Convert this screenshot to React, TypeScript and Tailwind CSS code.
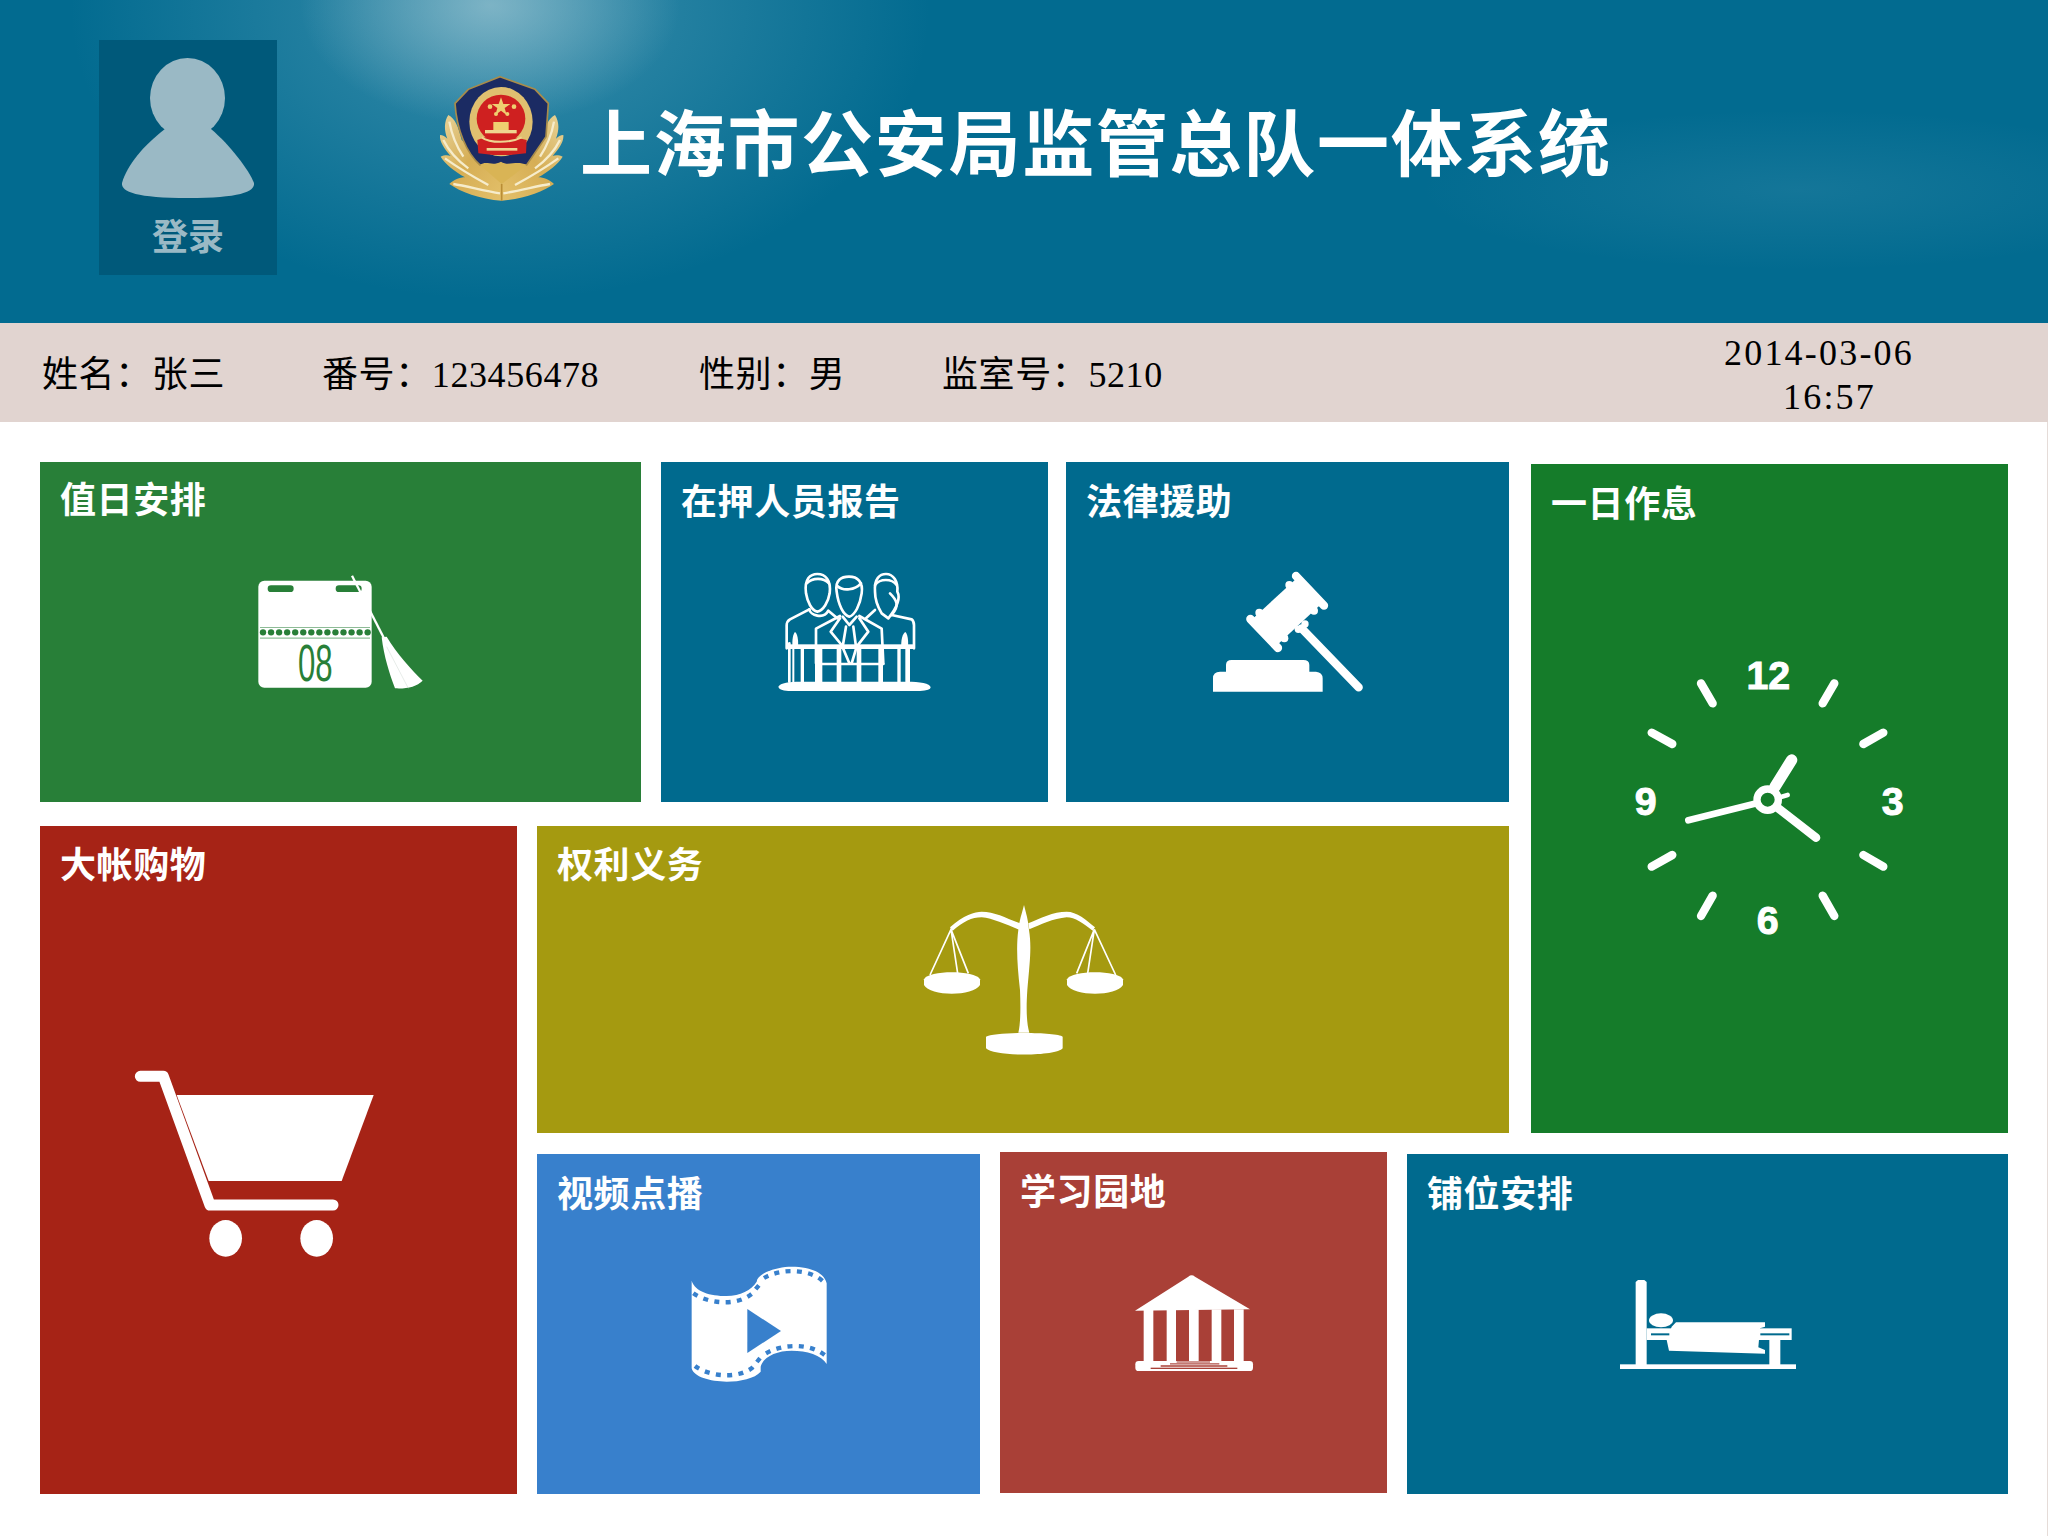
import type { ReactNode } from 'react'

function Tile({ title, className, titleClassName = 'pt-[21px]', children }: { title: string; className: string; titleClassName?: string; children: ReactNode }) {
  return (
    <div className={className}>
      <div className={`h-[60px] px-5 text-[36px] leading-[39px] font-bold tracking-[0.6px] text-white font-['Liberation_Sans','Noto_Sans_CJK_SC',sans-serif] ${titleClassName}`}>
        {title}
      </div>
      {children}
    </div>
  )
}

function Avatar() {
  return (
    <svg width="178" height="168" viewBox="0 0 178 168" className="block">
      <ellipse cx="88.5" cy="58" rx="37.5" ry="40" fill="#9ab9c5" />
      <path d="M66 89 L112 89 C131 105 150 130 155 143 C156 152 140 158 89 158 C38 158 22 152 23 143 C28 125 45 105 66 89Z" fill="#9ab9c5" />
    </svg>
  )
}

function PoliceBadge() {
  const leaf = 'M85 165 C105 175 115 200 125 240 L245 330 L245 422 C180 418 120 395 88 372 C100 360 120 352 135 352 C105 335 75 312 62 290 C72 285 85 285 92 288 C72 265 58 245 60 225 C68 225 76 230 82 236 C72 210 72 185 85 165Z'
  const veins = 'M88 185 C95 225 110 260 130 290 M70 240 C85 270 110 300 145 325 M75 295 C110 320 150 345 205 375 M100 372 C140 378 190 392 240 400'
  return (
    <svg width="146" height="150" viewBox="0 0 438 450" className="block ml-[143px] mt-[60px] shrink-0">
      <defs>
        <linearGradient id="gold" x1="0" y1="0" x2="1" y2="1">
          <stop offset="0" stopColor="#e8d49a" />
          <stop offset="0.5" stopColor="#d6ae55" />
          <stop offset="1" stopColor="#e3c06a" />
        </linearGradient>
      </defs>
      <path d={leaf} fill="url(#gold)" />
      <path d={veins} fill="none" stroke="#f6eccb" strokeWidth="7" />
      <g transform="translate(490,0) scale(-1,1)">
        <path d={leaf} fill="url(#gold)" />
        <path d={veins} fill="none" stroke="#f6eccb" strokeWidth="7" />
      </g>
      <path d="M245 372 L245 422" stroke="#b98d35" strokeWidth="5" />
      <path d="M240 50 L345 88 L385 130 L378 230 L320 315 L180 315 C140 280 110 210 105 130 L145 88Z" fill="#1b2b63" stroke="#a98c4a" strokeWidth="5" />
      <ellipse cx="243" cy="185" rx="95" ry="104" fill="#e0c070" />
      <ellipse cx="243" cy="176" rx="73" ry="72" fill="#cf2020" />
      <path d="M172 240 L195 232 L285 232 L320 240 L318 280 L270 285 L220 285 L175 280Z" fill="#cf2020" />
      <path d="M243 112 L250 132 L271 132 L254 144 L260 165 L243 152 L226 165 L232 144 L215 132 L236 132Z" fill="#efcf70" />
      <circle cx="210" cy="140" r="7" fill="#efcf70" />
      <circle cx="282" cy="140" r="7" fill="#efcf70" />
      <circle cx="228" cy="162" r="6" fill="#efcf70" />
      <circle cx="262" cy="162" r="6" fill="#efcf70" />
      <rect x="220" y="186" width="46" height="24" fill="#efcf70" />
      <rect x="195" y="210" width="95" height="10" fill="#efd590" />
      <path d="M185 232 C210 250 270 250 305 232" stroke="#efd590" strokeWidth="6" fill="none" />
      <rect x="200" y="264" width="92" height="8" fill="#efd590" />
      <path d="M180 315 C200 300 215 320 243 305 C265 320 290 300 320 315 L245 372Z" fill="#d9b455" />
    </svg>
  )
}

function CalendarBroom({ className }: { className: string }) {
  const dots = [...Array(14)].map((_, i) => 99 + i * 24.15)
  return (
    <svg width="220" height="170" viewBox="0 0 660 510" className={className}>
      <rect x="85" y="122" width="340" height="321" rx="18" fill="#fff" />
      <rect x="113" y="136" width="78" height="20" rx="10" fill="#287f38" />
      <rect x="317" y="136" width="78" height="20" rx="10" fill="#287f38" />
      <line x1="366" y1="107" x2="462" y2="295" stroke="#fff" strokeWidth="7" />
      <rect x="90" y="261" width="330" height="3" fill="#8dbb96" />
      <rect x="90" y="292" width="330" height="5" fill="#aad0b2" />
      {dots.map((x) => (
        <circle key={x} cx={x} cy="277" r="9.5" fill="#287f38" />
      ))}
      <text x="204" y="422" fontSize="158" textLength="104" lengthAdjust="spacingAndGlyphs" fill="#287f38" fontFamily="Liberation Sans">08</text>
      <path d="M455 292 L470 290 C500 340 545 390 578 422 C560 440 530 447 495 445 C478 400 462 350 455 292Z" fill="#fff" />
      <line x1="470" y1="320" x2="535" y2="445" stroke="#cfd8d2" strokeWidth="1.5" />
    </svg>
  )
}

function CourtPeople({ className }: { className: string }) {
  return (
    <svg width="200" height="160" viewBox="0 0 600 480" className={className}>
      <g fill="none" stroke="#fff" strokeWidth="8" strokeLinejoin="round" strokeLinecap="round">
        <path d="M138 130 C132 85 152 72 172 72 C196 72 214 90 209 130 C205 155 190 182 172 185 C155 182 142 155 138 130Z" />
        <path d="M140 100 C158 82 190 82 207 100" />
        <path d="M148 178 C150 195 190 210 205 182 L232 205" />
        <path d="M148 178 L90 208 Q80 214 80 226 L80 295" />
        <path d="M230 125 C224 90 245 80 267 80 C292 80 310 95 305 130 C300 165 285 195 268 200 C250 195 235 165 230 125Z" />
        <path d="M232 108 C250 125 285 120 303 100" />
        <path d="M240 198 L168 236 L168 340" />
        <path d="M298 198 L365 236 L370 340" />
        <path d="M240 205 L212 245 L245 285 L268 340 M298 205 L325 245 L290 290 L275 340" />
        <path d="M248 200 L268 225 L290 200 M258 230 L248 290 M280 230 L288 290" />
        <path d="M345 125 C342 85 360 72 378 72 C400 72 415 95 412 125 C425 150 405 180 385 205 L365 190 C350 165 345 150 345 125Z" />
        <path d="M345 105 C360 85 395 85 410 105" />
        <path d="M390 130 C410 150 420 165 395 195" />
        <path d="M345 180 L318 205" />
        <path d="M395 195 L455 208 Q462 214 462 226 L462 295" />
        <path d="M88 280 L88 395 M440 280 L440 395" />
        <path d="M170 342 L370 342" />
      </g>
      <rect x="80" y="283" width="382" height="14" fill="#fff" />
      <g fill="#fff">
        <rect x="97" y="297" width="6" height="100" />
        <rect x="122" y="297" width="10" height="100" />
        <rect x="165" y="297" width="22" height="100" />
        <rect x="230" y="297" width="14" height="100" />
        <rect x="290" y="297" width="14" height="100" />
        <rect x="355" y="297" width="14" height="100" />
        <rect x="412" y="297" width="10" height="100" />
        <rect x="444" y="297" width="6" height="100" />
        <path d="M98 295 C95 270 100 250 105 246 C112 250 116 270 114 295Z" />
        <path d="M424 295 C422 270 428 250 436 246 C442 250 446 270 444 295Z" />
        <path d="M55 410 C60 398 90 395 120 395 L440 395 C480 395 510 400 512 412 Q512 422 480 423 L85 423 Q55 420 55 410Z" />
      </g>
    </svg>
  )
}

function Gavel({ className }: { className: string }) {
  return (
    <svg width="200" height="160" viewBox="0 0 600 480" className={className}>
      <g fill="#fff">
        <polygon points="184,210 322,83 396,160 259,287" />
        <circle cx="208" cy="188" r="12" />
        <circle cx="298" cy="105" r="12" />
        <circle cx="372" cy="182" r="12" />
        <circle cx="283" cy="265" r="12" />
        <circle cx="325" cy="238" r="11" />
        <circle cx="345" cy="222" r="11" />
        <path d="M108 345 Q108 330 125 330 L340 330 Q358 330 358 345 L358 365 L378 365 Q398 367 398 385 L398 425 L69 425 L69 385 Q69 365 90 365 L108 365Z" />
      </g>
      <g stroke="#fff" strokeWidth="25" strokeLinecap="round">
        <line x1="181" y1="207" x2="264" y2="294" />
        <line x1="318" y1="78" x2="402" y2="167" />
        <line x1="335" y1="235" x2="506" y2="412" />
      </g>
    </svg>
  )
}

function Clock({ className }: { className: string }) {
  const ticks = [
    [303, 130, 338, 190],
    [703, 130, 668, 190],
    [850, 278, 790, 312],
    [155, 278, 217, 312],
    [155, 680, 217, 645],
    [850, 680, 790, 645],
    [303, 828, 338, 767],
    [703, 828, 668, 767],
  ]
  return (
    <svg width="340" height="320" viewBox="0 0 1020 960" className={className}>
      <g stroke="#fff" strokeLinecap="round" fill="none">
        {ticks.map((t) => (
          <line key={t.join()} x1={t[0]} y1={t[1]} x2={t[2]} y2={t[3]} strokeWidth="25" />
        ))}
        <line x1="525" y1="440" x2="575" y2="360" strokeWidth="34" />
        <line x1="470" y1="490" x2="265" y2="541" strokeWidth="20" />
        <line x1="535" y1="505" x2="648" y2="593" strokeWidth="26" />
        <line x1="545" y1="470" x2="563" y2="465" strokeWidth="14" />
        <circle cx="503" cy="479" r="32" strokeWidth="22" />
      </g>
      <g fill="#fff" stroke="#fff" strokeWidth="3" fontFamily="Liberation Sans" fontWeight="700" fontSize="118" textAnchor="middle">
        <text x="505" y="148">12</text>
        <text x="878" y="525">3</text>
        <text x="137" y="525">9</text>
        <text x="503" y="882">6</text>
      </g>
    </svg>
  )
}

function Scales({ className }: { className: string }) {
  return (
    <svg width="240" height="180" viewBox="0 0 720 540" className={className}>
      <g fill="#fff">
        <path d="M150 112 C190 75 225 65 245 65 C285 65 320 85 360 100 L360 120 C320 105 280 85 245 82 C215 82 190 95 158 122Z" />
        <path d="M385 100 C420 85 460 65 500 65 C530 65 560 90 585 112 L578 122 C550 100 525 82 500 82 C460 85 420 105 388 118Z" />
        <path d="M372 45 C378 70 385 90 387 120 C395 170 390 210 382 300 C378 360 380 400 388 428 L355 428 C362 400 362 350 360 300 C352 230 348 170 355 120 C358 90 366 70 372 45Z" />
        <path d="M258 440 C280 425 470 425 488 440 L488 475 C470 500 280 500 258 475Z" />
        <path d="M72 268 C85 240 225 240 240 268 L240 285 C220 320 90 320 72 285Z" />
        <path d="M501 268 C515 240 655 240 669 268 L669 285 C650 320 520 320 501 285Z" />
      </g>
      <g stroke="#fff" strokeWidth="5" fill="none">
        <path d="M90 255 L153 118 L173 250 M153 118 L205 250" />
        <path d="M530 250 L583 118 L563 250 M583 118 L647 255" />
      </g>
    </svg>
  )
}

function Cart({ className }: { className: string }) {
  return (
    <svg width="290" height="230" viewBox="0 0 870 690" className={className}>
      <path d="M91 79 L160 79 L300 465 L669 465" fill="none" stroke="#fff" strokeWidth="33" strokeLinecap="round" strokeLinejoin="round" />
      <polygon points="200,135 791,135 695,393 296,393" fill="#fff" />
      <ellipse cx="347" cy="565" rx="49" ry="55" fill="#fff" />
      <ellipse cx="620" cy="565" rx="49" ry="55" fill="#fff" />
    </svg>
  )
}

function FilmStrip({ className }: { className: string }) {
  return (
    <svg width="190" height="150" viewBox="0 0 570 450" className={className}>
      <path d="M65 92 C75 125 120 138 170 138 C210 138 245 120 260 95 C262 70 320 50 365 50 C415 50 462 65 470 100 L470 342 C455 315 410 302 365 302 C320 302 280 320 272 350 L272 365 C255 385 210 395 170 395 C120 395 70 380 65 355Z" fill="#fff" />
      <g fill="none" stroke="#3880cc" strokeWidth="13" strokeDasharray="15 19">
        <path d="M70 130 C110 158 195 172 245 132 L270 102" />
        <path d="M282 84 C330 55 420 55 460 95" />
        <path d="M75 348 C110 376 195 390 245 355 L272 322" />
        <path d="M288 310 C340 280 420 280 464 315" />
      </g>
      <polygon points="232,177 333,243 232,309" fill="#3880cc" />
    </svg>
  )
}

function Temple({ className }: { className: string }) {
  return (
    <svg width="170" height="130" viewBox="0 0 510 390" className={className}>
      <g fill="#fff">
        <path d="M45 152 L205 50 Q215 42 225 50 L390 148Z" />
        <rect x="71" y="148" width="29" height="160" />
        <rect x="140" y="148" width="28" height="160" />
        <rect x="207" y="148" width="29" height="160" />
        <rect x="275" y="148" width="29" height="160" />
        <rect x="342" y="148" width="29" height="160" />
        <rect x="46" y="303" width="353" height="30" rx="10" />
      </g>
      <g fill="#a94037">
        <rect x="170" y="303" width="100" height="6" opacity="0.55" />
        <rect x="150" y="309" width="148" height="5" opacity="0.7" />
        <rect x="122" y="315" width="200" height="6" opacity="0.75" />
        <rect x="92" y="323" width="260" height="4" />
      </g>
    </svg>
  )
}

function Bed({ className }: { className: string }) {
  return (
    <svg width="210" height="130" viewBox="0 0 630 390" className={className}>
      <g fill="#fff">
        <path d="M107 66 L114 60 L133 60 L140 66 L140 320 L107 320Z" />
        <rect x="60" y="313" width="528" height="14" />
        <rect x="508" y="235" width="33" height="85" />
        <rect x="140" y="205" width="435" height="35" />
        <polygon points="228,187 495,187 495,200 480,205 475,262 495,270 495,281 207,272 200,240 215,200" />
        <ellipse cx="183" cy="181" rx="36" ry="21" />
      </g>
      <g fill="#006a8e">
        <rect x="153" y="220" width="55" height="6" />
        <rect x="481" y="220" width="87" height="6" />
      </g>
    </svg>
  )
}

export default function App() {
  return (
    <div className="w-[2048px] h-[1536px] bg-white font-['Liberation_Serif','Noto_Sans_CJK_SC',serif]">
      <header className="h-[323px] flex items-start bg-[#026b90] bg-[radial-gradient(ellipse_190px_120px_at_490px_5px,rgba(170,205,215,0.6),rgba(170,205,215,0)),radial-gradient(ellipse_430px_290px_at_500px_10px,rgba(95,165,190,0.6),rgba(95,165,190,0)),radial-gradient(ellipse_380px_80px_at_1800px_190px,rgba(130,185,205,0.14),rgba(130,185,205,0))]">
        <div className="ml-[99px] mt-[40px] w-[178px] h-[235px] bg-[#00597a] flex flex-col items-center shrink-0">
          <Avatar />
          <div className="mt-[8px] text-[36px] leading-[36px] font-bold text-[#9ab9c5] font-['Noto_Sans_CJK_SC',sans-serif]">登录</div>
        </div>
        <PoliceBadge />
        <h1 className="ml-[14px] mt-[99px] text-[72px] leading-[80px] font-bold tracking-[1.7px] text-white whitespace-nowrap font-['Noto_Sans_CJK_SC',sans-serif]">
          上海市公安局监管总队一体系统
        </h1>
      </header>

      <div className="h-[99px] bg-[#e1d4d0] flex items-center pl-[42px] text-[36px] tracking-[0.6px] text-black">
        <div className="w-[280px] pt-[5px] shrink-0">姓名：张三</div>
        <div className="w-[377px] pt-[5px] shrink-0">番号：123456478</div>
        <div className="w-[243px] pt-[5px] shrink-0">性别：男</div>
        <div className="w-[782px] pt-[5px] shrink-0">监室号：5210</div>
        <div className="flex flex-col text-[36px] leading-[44px] tracking-[2.2px] pt-[5px]">
          <div>2014-03-06</div>
          <div className="ml-[59px]">16:57</div>
        </div>
      </div>

      <main className="grid h-[1114px] border-r border-[#e5dcd8] grid-cols-[477px_20px_104px_20px_319px_20px_48px_18px_321px_20px_102px_22px_477px] grid-rows-[340px_24px_307px_21px_340px] content-start pl-[40px] pt-[40px]">
        <Tile title="值日安排" titleClassName="pt-[19px]" className="col-start-1 col-end-4 row-start-1 row-end-2 bg-[#287f38]">
          <CalendarBroom className="block ml-[190px] mt-[18px]" />
        </Tile>
        <Tile title="在押人员报告" className="col-start-5 col-end-8 row-start-1 row-end-2 bg-[#006a8e]">
          <CourtPeople className="block ml-[99px] mt-[28px]" />
        </Tile>
        <Tile title="法律援助" className="col-start-9 col-end-12 row-start-1 row-end-2 bg-[#006a8e]">
          <Gavel className="block ml-[124px] mt-[28px]" />
        </Tile>
        <Tile title="一日作息" className="col-start-13 col-end-14 row-start-1 row-end-4 mt-[2px] bg-[#157c2a]">
          <Clock className="block ml-[69px] mt-[116px]" />
        </Tile>
        <Tile title="大帐购物" titleClassName="pt-[20px]" className="col-start-1 col-end-2 row-start-3 row-end-6 bg-[#a62316]">
          <Cart className="block ml-[70px] mt-[164px]" />
        </Tile>
        <Tile title="权利义务" titleClassName="pt-[20px]" className="col-start-3 col-end-12 row-start-3 row-end-4 bg-[#a59a10]">
          <Scales className="block ml-[363px] mt-[4px]" />
        </Tile>
        <Tile title="视频点播" className="col-start-3 col-end-6 row-start-5 row-end-6 bg-[#3880cc]">
          <FilmStrip className="block ml-[133px] mt-[36px]" />
        </Tile>
        <Tile title="学习园地" className="col-start-7 col-end-10 row-start-5 row-end-6 -mt-[2px] mb-[1px] bg-[#a94037]">
          <Temple className="block ml-[120px] mt-[48px]" />
        </Tile>
        <Tile title="铺位安排" className="col-start-11 col-end-14 row-start-5 row-end-6 bg-[#006a8e]">
          <Bed className="block ml-[193px] mt-[46px]" />
        </Tile>
      </main>
    </div>
  )
}
